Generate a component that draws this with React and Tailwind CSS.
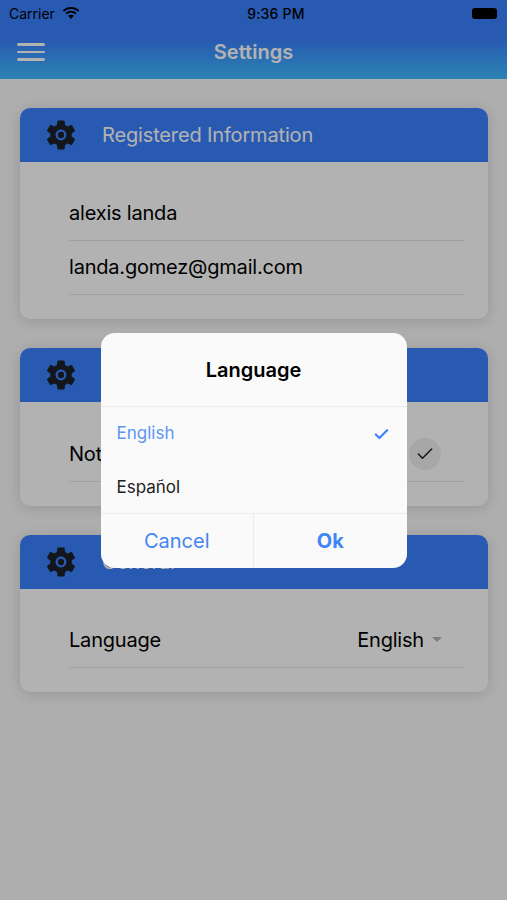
import React from "react";
import { Check } from "lucide-react";

function Gear() {
  return (
    <svg viewBox="0 0 24 24" className="w-[36px] h-[36px] shrink-0" aria-hidden="true">
      <path
        fill="#1c2028"
        d="M19.14 12.94c.04-.3.06-.61.06-.94 0-.32-.02-.64-.07-.94l2.03-1.58c.18-.14.23-.41.12-.61l-1.92-3.32c-.12-.22-.37-.29-.59-.22l-2.39.96c-.5-.38-1.03-.7-1.62-.94l-.36-2.54c-.04-.24-.24-.41-.48-.41h-3.84c-.24 0-.43.17-.47.41l-.36 2.54c-.59.24-1.13.57-1.62.94l-2.39-.96c-.22-.08-.47 0-.59.22L2.74 8.87c-.12.21-.08.47.12.61l2.03 1.58c-.05.3-.09.63-.09.94s.02.64.07.94l-2.03 1.58c-.18.14-.23.41-.12.61l1.92 3.32c.12.22.37.29.59.22l2.39-.96c.5.38 1.03.7 1.62.94l.36 2.54c.05.24.24.41.48.41h3.84c.24 0 .44-.17.47-.41l.36-2.54c.59-.24 1.13-.56 1.62-.94l2.39.96c.22.08.47 0 .59-.22l1.92-3.32c.12-.22.07-.47-.12-.61l-2.01-1.58zM12 15.6c-1.98 0-3.6-1.62-3.6-3.6s1.62-3.6 3.6-3.6 3.6 1.62 3.6 3.6-1.62 3.6-3.6 3.6z"
      />
      <circle cx="12" cy="12" r="2.1" fill="#1c2028" />
    </svg>
  );
}

function Card({ title, bodyClass, children }) {
  return (
    <section className="rounded-[10px] bg-white shadow-[0_2px_14px_rgba(0,0,0,0.14)] overflow-hidden">
      <div className="h-[54px] bg-[#3c81fe] flex items-center pl-[23px]">
        <Gear />
        <span className="ml-[23px] text-[20px] tracking-[-0.15px] text-white">{title}</span>
      </div>
      <div className={bodyClass}>{children}</div>
    </section>
  );
}

function Row({ children }) {
  return (
    <div className="ml-[49px] mr-[24px] h-[54px] pb-[2px] border-b border-[#e6e6e6] flex items-center justify-between text-[20px] tracking-[-0.2px] text-black">
      {children}
    </div>
  );
}

export default function App() {
  return (
    <div className="relative w-[507px] h-[900px] overflow-hidden bg-[#f9f9f9] font-['Inter','Liberation_Sans',sans-serif]">
      <header className="h-[79px] bg-linear-to-b from-[#3c81fe] from-50% to-[#40bcff] text-white">
        <div className="h-[27px] relative flex items-center justify-between pl-[9px] pr-[10px] text-black">
          <div className="flex items-center gap-[7px]">
            <span className="text-[14px]">Carrier</span>
            <svg viewBox="0 0 20 15" className="w-[18px] h-[13px]" fill="currentColor" aria-hidden="true">
              <path d="M10 2.2c3.1 0 5.9 1.2 8 3.2l1.5-1.6C17 1.4 13.7 0 10 0S3 1.4.5 3.800L2 5.400c2.100-2 4.900-3.200 8-3.200z" />
              <path d="M10 6.600c1.900 0 3.600.7 4.900 1.900l1.500-1.600C14.700 5.300 12.500 4.400 10 4.400s-4.700.9-6.400 2.500l1.500 1.600C6.400 7.300 8.100 6.600 10 6.600z" />
              <path d="M10 8.800c-1.300 0-2.400.5-3.300 1.300L10 13.800l3.300-3.700c-.9-.8-2-1.300-3.300-1.300z" />
            </svg>
          </div>
          <span className="text-[14px] font-medium tracking-[0.2px]">9:36 PM</span>
          <div className="w-[25px] h-[11px] rounded-[3px] bg-black" />
        </div>
        <div className="relative h-[52px] flex items-center justify-center -mt-[1px]">
          <button className="absolute left-[17px] top-[17px] flex flex-col gap-[5px] w-[28px]" aria-label="Menu">
            <span className="h-[2.500px] bg-white rounded-full" />
            <span className="h-[2.500px] bg-white rounded-full" />
            <span className="h-[2.500px] bg-white rounded-full" />
          </button>
          <h1 className="text-[20px] font-semibold">Settings</h1>
        </div>
      </header>

      <main className="pt-[29px] pl-[20px] pr-[19px] flex flex-col">
        <Card title="Registered Information" bodyClass="pt-[25px] pb-[24px]">
          <Row>alexis landa</Row>
          <Row>landa.gomez@gmail.com</Row>
        </Card>
        <div className="h-[29px]" />
        <Card title="Notifications" bodyClass="pt-[26px] pb-[24px]">
          <Row>
            <span>Notifications</span>
            <span className="w-[32px] h-[32px] mr-[23px] rounded-full bg-[#f0f0f0] flex items-center justify-center">
              <Check size={20} strokeWidth={1.800} className="text-[#222]" />
            </span>
          </Row>
        </Card>
        <div className="h-[29px]" />
        <Card title="General" bodyClass="pt-[25px] pb-[24px]">
          <Row>
            <span>Language</span>
            <span className="flex items-center gap-[8px] mr-[22px]">
              English
              <span className="w-0 h-0 border-x-[5.500px] border-x-transparent border-t-[5px] border-t-[#b5b5b5]" />
            </span>
          </Row>
        </Card>
      </main>

      <div className="absolute inset-0 bg-black/30 flex items-center justify-center">
        <div className="w-[306px] h-[235px] mt-[1px] rounded-[14px] bg-[#fafafa] flex flex-col overflow-hidden">
          <div className="h-[74px] shrink-0 border-b border-[#ececec] flex items-center justify-center text-[20px] font-semibold text-black">
            Language
          </div>
          <div className="h-[54px] shrink-0 flex items-center justify-between pl-[16px] pr-[17px] text-[17px] text-[#5b97f3]">
            English
            <Check size={17} strokeWidth={3} className="text-[#3b82f6]" />
          </div>
          <div className="h-[53px] shrink-0 pt-[2px] border-b border-[#ececec] flex items-center pl-[16px] text-[17px] text-[#222]">
            Español
          </div>
          <div className="flex-1 flex text-[20px] text-[#4285f4]">
            <button className="flex-1 border-r border-[#ececec]">Cancel</button>
            <button className="flex-1 font-bold">Ok</button>
          </div>
        </div>
      </div>
    </div>
  );
}
